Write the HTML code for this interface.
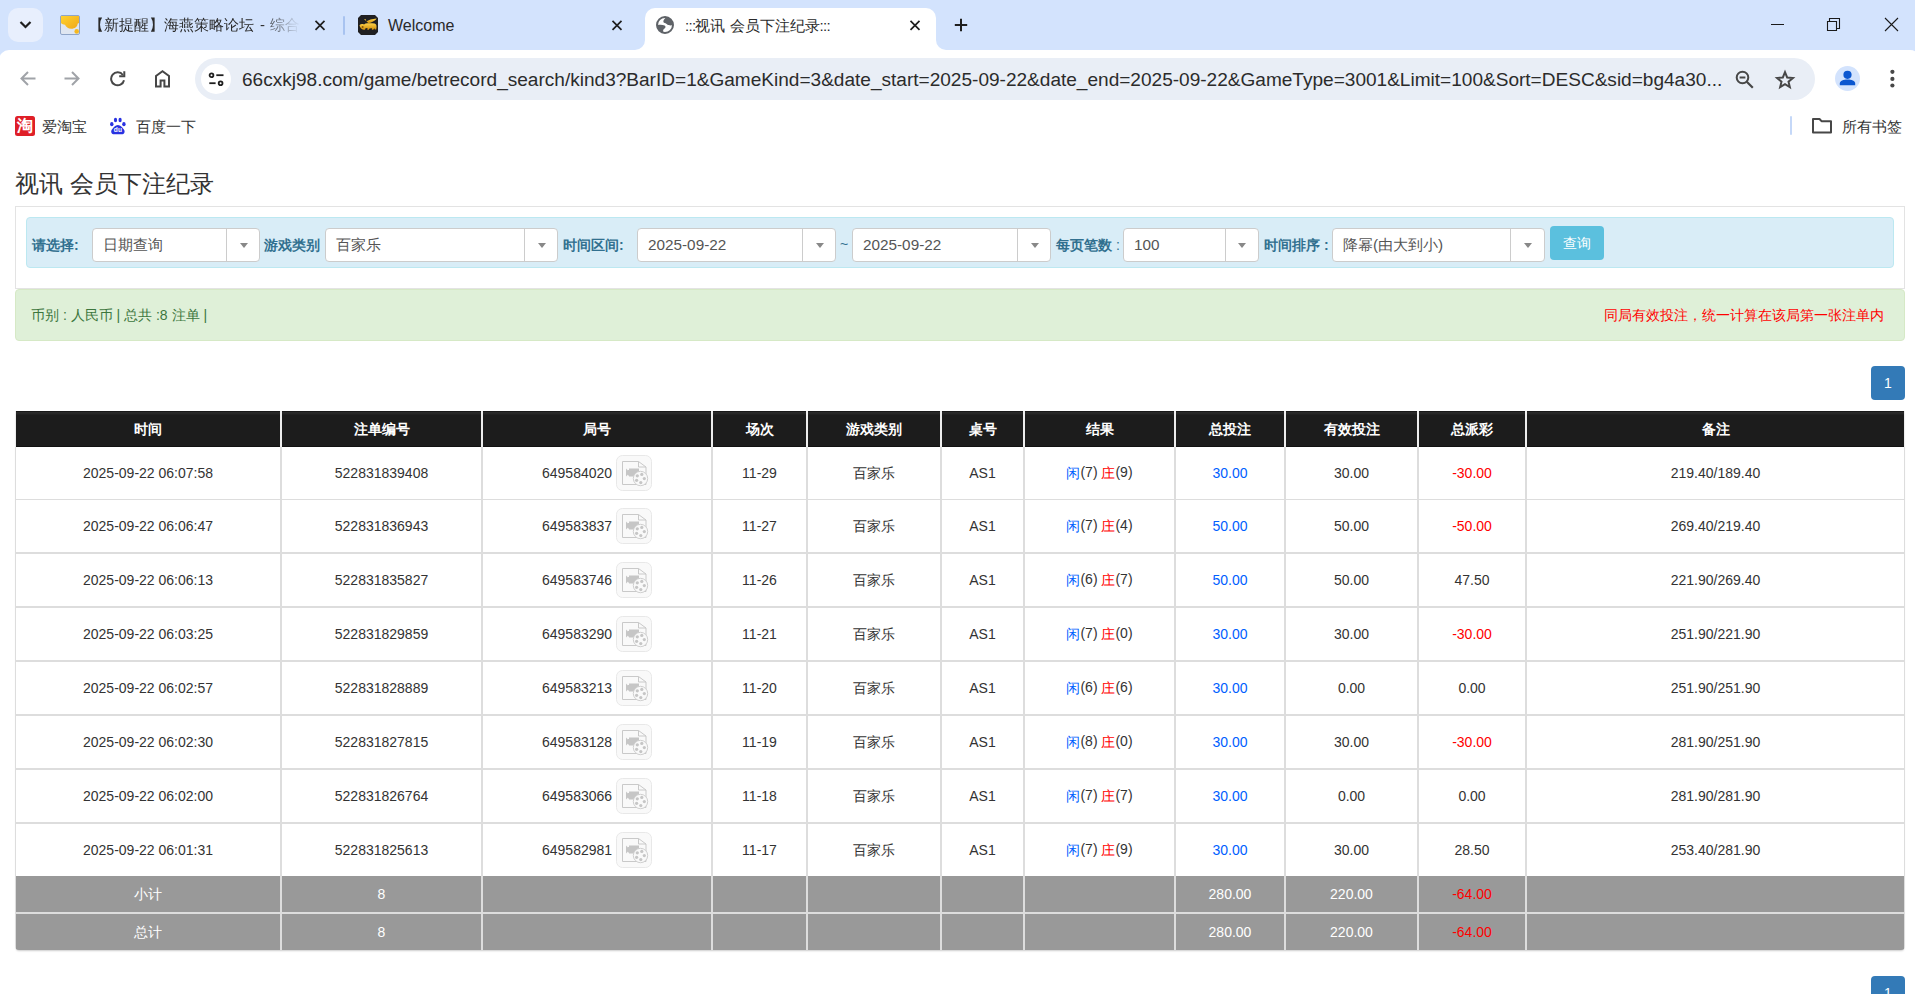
<!DOCTYPE html>
<html><head><meta charset="utf-8"><title>:::视讯 会员下注纪录:::</title>
<style>
*{box-sizing:border-box}
html,body{margin:0;padding:0}
body{width:1915px;height:994px;overflow:hidden;position:relative;background:#fff;font-family:"Liberation Sans",sans-serif;color:#333}
.abs{position:absolute}
svg{display:block}
/* browser chrome */
#tabstrip{left:0;top:0;width:1915px;height:64px;background:#d3e3fd}
#tabsearch{left:8px;top:8px;width:35px;height:34px;border-radius:10px;background:#e8effd}
.tabtitle{font-size:15px;color:#2a2a2a;white-space:nowrap;line-height:20px}
#activetab{left:645px;top:8px;width:291px;height:42px;background:#fff;border-radius:10px 10px 0 0}
.flare{width:10px;height:10px;top:40px;background:#fff}
.flare i{position:absolute;left:0;top:0;width:10px;height:10px;background:#d3e3fd}
#toolbar{left:-1px;top:50px;width:1921px;height:56px;background:#fff;border-radius:10px 10px 0 0}
#omnibox{left:195px;top:58px;width:1620px;height:42px;border-radius:21px;background:#e9eef6}
#tune{left:201px;top:64px;width:30px;height:30px;border-radius:50%;background:#fff}
#url{left:242px;top:67.5px;font-size:19.06px;line-height:24px;color:#2b2b2b;white-space:nowrap;letter-spacing:0}
.bm{font-size:15px;color:#333;line-height:20px;white-space:nowrap}
/* page */
#title{left:15px;top:169px;font-size:24px;line-height:30px;color:#333;white-space:nowrap}
#well{left:15px;top:206px;width:1890px;height:83px;border:1px solid #e3e3e3;background:#fff}
#filter{left:26px;top:217px;width:1868px;height:51px;background:#d9edf7;border:1px solid #bce8f1;border-radius:4px}
.lbl{font-size:14px;font-weight:bold;color:#31708f;line-height:20px;white-space:nowrap;top:235px}
.sel{top:228px;height:34px;border:1px solid #ccc;border-radius:4px;background:#fff}
.sel .v{position:absolute;left:10px;top:6px;font-size:15.3px;line-height:20px;color:#555;white-space:nowrap}
.sel .d{position:absolute;top:0;bottom:0;width:1px;background:#ccc}
.sel .c{position:absolute;top:14px;width:0;height:0;border-left:4px solid transparent;border-right:4px solid transparent;border-top:5px solid #888}
#btnq{left:1550px;top:226px;width:54px;height:34px;background:#5bc0de;border-radius:4px;color:#fff;font-size:14px;line-height:34px;text-align:center}
#green{left:15px;top:289px;width:1890px;height:52px;background:#dff0d8;border:1px solid #d6e9c6;border-radius:4px}
#green .l{position:absolute;left:15px;top:15px;font-size:14px;line-height:20px;color:#3c763d;white-space:nowrap}
#green .r{position:absolute;right:20px;top:15px;font-size:14px;line-height:20px;color:#f00;white-space:nowrap}
.page1{left:1871px;width:34px;height:34px;background:#337ab7;border-radius:4px;color:#fff;font-size:14px;line-height:34px;text-align:center}

#tbl{background:#ddd;overflow:hidden;border-radius:0 0 4px 4px;box-shadow:0 2px 2px -1px rgba(0,0,0,.2)}
#tbl>div{position:absolute;display:flex;align-items:center;justify-content:center;font-size:14px;white-space:nowrap}
.th{background:linear-gradient(#181818 0,#181818 1px,#2b2b2b 1px,#262626 3px,#1c1c1c 4px,#1c1c1c 35px,#111 35px);color:#fff;font-weight:bold}
.td{background:#fff;color:#333}
.tg{background:#999;color:#fff}
.rd{color:#f00}
.cj{position:relative;top:1px}
.bl{color:#0060ff}
.vi{display:block}
.ic{display:inline-flex;align-items:center}
</style></head><body>
<svg width="0" height="0" style="position:absolute"><defs>
<symbol id="vicon" viewBox="0 0 36 36">
<rect x="0.5" y="0.5" width="35" height="35" rx="6" fill="#f9f9f9" stroke="#e8e8e8"/>
<path d="M6.5 6.5 H22.5 L30 12 V29.5 H6.5 Z" fill="#f9f9f9" stroke="#c9c9c9" stroke-width="1"/>
<path d="M22.5 6.5 V12 H30" fill="none" stroke="#c9c9c9" stroke-width="1"/>
<path d="M10 13.5 L12 15.5 V19.5 L10 21.5 Z M12 15 H23 V20.5 H12 Z" fill="#c6c6c6"/>
<rect x="13" y="13.5" width="10" height="8" fill="#c6c6c6"/>
<circle cx="24.5" cy="23.5" r="7.2" fill="#f9f9f9" stroke="#cfcfcf" stroke-width="1"/>
<circle cx="21.3" cy="20.8" r="1.6" fill="#c6c6c6"/><circle cx="25.8" cy="19.4" r="1.6" fill="#c6c6c6"/>
<circle cx="28.3" cy="23.6" r="1.6" fill="#c6c6c6"/><circle cx="20.6" cy="25.3" r="1.6" fill="#c6c6c6"/>
<circle cx="24.8" cy="27.6" r="1.6" fill="#c6c6c6"/>
</symbol></defs></svg>

<!-- TAB STRIP -->
<div id="tabstrip" class="abs"></div>
<div id="tabsearch" class="abs"></div>
<svg class="abs" style="left:19px;top:20px" width="13" height="10" viewBox="0 0 13 10"><path d="M1.5 2 L6.5 7 L11.5 2" fill="none" stroke="#1f1f1f" stroke-width="2.2"/></svg>

<div id="activetab" class="abs"></div>
<div class="abs flare" style="left:635px"><i style="border-bottom-right-radius:10px"></i></div>
<div class="abs flare" style="left:936px"><i style="border-bottom-left-radius:10px"></i></div>

<!-- tab 1 -->
<svg class="abs" style="left:60px;top:15px" width="20" height="20" viewBox="0 0 20 20">
<rect x="0.5" y="0.5" width="19" height="19" rx="1.5" fill="#dfe6f1" stroke="#8fa5c8"/>
<defs><linearGradient id="yb" x1="0" y1="0" x2="1" y2="1"><stop offset="0" stop-color="#ffd22e"/><stop offset="1" stop-color="#f0a81a"/></linearGradient></defs><path d="M1 1 H19 V8 L17.6 8.8 C17.6 11.6, 15 13.8, 11.3 13.8 C8 13.8, 6 12, 5 9.8 C3.5 9.5, 1.8 9, 1 8 Z" fill="url(#yb)"/>
<circle cx="16.7" cy="16.4" r="2.3" fill="#f5b820"/>
</svg>
<div class="abs tabtitle" style="left:89px;top:15px;width:211px;overflow:hidden;-webkit-mask-image:linear-gradient(to right,#000 172px,rgba(0,0,0,.15) 205px,transparent 211px)">【新提醒】海燕策略论坛<span style="margin:0 0.5px 0 6px">-</span> 综合论坛</div>
<svg class="abs" style="left:314px;top:20px" width="12" height="11" viewBox="0 0 12 11"><path d="M1.5 0.8 L10.5 9.8 M10.5 0.8 L1.5 9.8" stroke="#1f1f1f" stroke-width="1.7"/></svg>
<div class="abs" style="left:343px;top:16px;width:2px;height:19px;background:#a8c3f0;border-radius:1px"></div>

<!-- tab 2 -->
<svg class="abs" style="left:358px;top:15px" width="20" height="20" viewBox="0 0 20 20">
<defs><linearGradient id="gold" x1="0" y1="0" x2="0" y2="1"><stop offset="0" stop-color="#ffd34a"/><stop offset="1" stop-color="#d08e0c"/></linearGradient></defs>
<path d="M3 0 H17 L20 3 V17 L17 20 H3 L0 17 V3 Z" fill="#202022"/>
<path d="M6.2 4.2 C7 3.6, 7.8 4, 8 5 L8.3 6.5 C10.5 5.2, 14 4, 18.6 3.6 C17.8 5.2, 15.5 6.8, 12.5 7.8 L10.5 8.2 Z" fill="url(#gold)"/>
<path d="M1.5 10.2 C2.5 9, 4.5 8.8, 6 9.6 L7.5 8.6 C9.5 8, 13.5 8, 16.5 8.6 C18 9, 18.8 10.5, 18.5 12.5 L18.2 14.6 L16.8 14.6 L16.5 13.2 L15.2 14.8 L13.8 14.8 L14 13.3 L11.5 13.5 L10.8 14.8 L9.3 14.8 L9.5 13 L7.5 13.2 L7 14.8 L5.5 14.8 C3.5 14.5, 2 12.5, 1.5 10.2 Z" fill="url(#gold)"/>
<circle cx="4.6" cy="12" r="1" fill="#8a5a08"/>
</svg>
<div class="abs tabtitle" style="left:388px;top:16px;font-size:16px">Welcome</div>
<svg class="abs" style="left:611px;top:20px" width="12" height="11" viewBox="0 0 12 11"><path d="M1.5 0.8 L10.5 9.8 M10.5 0.8 L1.5 9.8" stroke="#1f1f1f" stroke-width="1.7"/></svg>

<!-- active tab -->
<svg class="abs" style="left:656px;top:16px" width="18" height="18" viewBox="0 0 18 18">
<circle cx="9" cy="9" r="8" fill="#fff" stroke="#5f6368" stroke-width="2"/>
<path d="M10.4 1.3 C8.6 2.6, 7 4.6, 7.4 5.9 C7.9 7.1, 9.8 6.9, 11 8.2 C11.8 9.2, 13.6 9.6, 16.6 9.3 L17 9 A8 8 0 0 0 10.4 1.3 Z" fill="#5f6368"/>
<path d="M1.2 9.2 C3 8.8, 6.5 8.6, 8.6 9.6 C10 10.4, 9.8 12, 8.2 12.8 C7 13.4, 6.8 15, 7.6 16.8 A8 8 0 0 1 1.2 9.2 Z" fill="#5f6368"/>
</svg>
<div class="abs tabtitle" style="left:685px;top:16px"><span style="letter-spacing:-0.7px">:::</span>视讯 会员下注纪录<span style="letter-spacing:-0.7px">:::</span></div>
<svg class="abs" style="left:909px;top:20px" width="12" height="11" viewBox="0 0 12 11"><path d="M1.5 0.8 L10.5 9.8 M10.5 0.8 L1.5 9.8" stroke="#1f1f1f" stroke-width="1.7"/></svg>
<svg class="abs" style="left:954px;top:18px" width="14" height="14" viewBox="0 0 14 14"><path d="M7 0.8 V13.2 M0.8 7 H13.2" stroke="#1f1f1f" stroke-width="2"/></svg>

<!-- window controls -->
<div class="abs" style="left:1771px;top:24px;width:13px;height:1px;background:#1a1a1a"></div>
<svg class="abs" style="left:1826px;top:17px" width="15" height="15" viewBox="0 0 15 15"><path d="M1.5 4.5 H10.5 V13.5 H1.5 Z M3.5 4.5 V1.5 H13.5 V11.5 H10.5" fill="none" stroke="#1a1a1a" stroke-width="1.1"/></svg>
<svg class="abs" style="left:1884px;top:17px" width="15" height="15" viewBox="0 0 15 15"><path d="M1 1 L14 14 M14 1 L1 14" stroke="#1a1a1a" stroke-width="1.1"/></svg>

<!-- TOOLBAR -->
<div id="toolbar" class="abs"></div>
<div id="omnibox" class="abs"></div>
<div id="tune" class="abs"></div>
<!-- toolbar icons -->
<svg class="abs" style="left:19px;top:70px" width="18" height="17" viewBox="0 0 18 17"><path d="M16.5 8.5 H3 M9 2 L2.5 8.5 L9 15" fill="none" stroke="#a0a3a8" stroke-width="2"/></svg>
<svg class="abs" style="left:63px;top:70px" width="18" height="17" viewBox="0 0 18 17"><path d="M1.5 8.5 H15 M9 2 L15.5 8.5 L9 15" fill="none" stroke="#a0a3a8" stroke-width="2"/></svg>
<svg class="abs" style="left:109px;top:70px" width="18" height="17" viewBox="0 0 18 17"><path d="M13.9 5.0 A6.5 6.5 0 1 0 15.0 10.2" fill="none" stroke="#474747" stroke-width="2"/><path d="M15.3 1.2 V6.3 H10.2" fill="none" stroke="#474747" stroke-width="2"/></svg>
<svg class="abs" style="left:154px;top:69px" width="18" height="20" viewBox="0 0 18 20"><path d="M2 17.6 V6.9 L8.5 2.2 L15 6.9 V17.6 H10.4 V11.5 H6.6 V17.6 Z" fill="none" stroke="#474747" stroke-width="2" stroke-linejoin="miter"/></svg>
<svg class="abs" style="left:208px;top:71px" width="17" height="16" viewBox="0 0 17 16"><circle cx="3.5" cy="4.2" r="1.9" fill="none" stroke="#1f1f1f" stroke-width="1.8"/><path d="M8.3 4.2 H15.5" stroke="#1f1f1f" stroke-width="1.8"/><path d="M1.3 12.2 H7.6" stroke="#1f1f1f" stroke-width="1.8"/><circle cx="12.6" cy="12.2" r="1.9" fill="none" stroke="#1f1f1f" stroke-width="1.8"/></svg>
<svg class="abs" style="left:1735px;top:70px" width="20" height="19" viewBox="0 0 20 19"><circle cx="7.5" cy="7.5" r="5.8" fill="none" stroke="#474747" stroke-width="2"/><path d="M4.6 7.5 H10.4" stroke="#474747" stroke-width="2"/><path d="M11.8 11.8 L17.8 17.8" stroke="#474747" stroke-width="2.2"/></svg>
<svg class="abs" style="left:1774px;top:69px" width="22" height="21" viewBox="0 0 22 21"><g transform="translate(11 11) scale(0.9) translate(-11 -11)"><path d="M11 2.3 L13.4 8.2 L19.8 8.7 L14.9 12.8 L16.4 19 L11 15.7 L5.6 19 L7.1 12.8 L2.2 8.7 L8.6 8.2 Z" fill="none" stroke="#474747" stroke-width="2.2" stroke-linejoin="miter"/></g></svg>
<svg class="abs" style="left:1835px;top:66px" width="25" height="25" viewBox="0 0 25 25"><circle cx="12.5" cy="12.5" r="12.5" fill="#d3e3fd"/><circle cx="12.5" cy="8.8" r="4.1" fill="#0b57d0"/><path d="M4.8 19.3 V17.6 C4.8 14.9, 8.5 13.6, 12.5 13.6 C16.5 13.6, 20.2 14.9, 20.2 17.6 V19.3 Z" fill="#0b57d0"/></svg>
<svg class="abs" style="left:1889px;top:68px" width="7" height="22" viewBox="0 0 7 22"><circle cx="3.4" cy="3.8" r="2.1" fill="#474747"/><circle cx="3.4" cy="10.9" r="2.1" fill="#474747"/><circle cx="3.4" cy="17.5" r="2.1" fill="#474747"/></svg>
<div id="url" class="abs">66cxkj98.com/game/betrecord_search/kind3?BarID=1&amp;GameKind=3&amp;date_start=2025-09-22&amp;date_end=2025-09-22&amp;GameType=3001&amp;Limit=100&amp;Sort=DESC&amp;sid=bg4a30...</div>

<!-- BOOKMARKS -->
<svg class="abs" style="left:15px;top:116px" width="20" height="20" viewBox="0 0 20 20"><rect width="20" height="20" rx="2.5" fill="#df1f27"/><text x="9.8" y="14.9" font-size="15.5" font-weight="bold" fill="#fff" text-anchor="middle" font-family="Liberation Sans, sans-serif">淘</text></svg>
<div class="abs bm" style="left:42px;top:117px">爱淘宝</div>
<svg class="abs" style="left:109px;top:117px" width="18" height="19" viewBox="0 0 18 19"><ellipse cx="2.8" cy="7.2" rx="1.7" ry="2.1" fill="#2932e1"/><ellipse cx="6.5" cy="3" rx="1.6" ry="2.2" fill="#2932e1"/><ellipse cx="11.1" cy="3" rx="1.6" ry="2.2" fill="#2932e1"/><ellipse cx="14.9" cy="7.2" rx="1.7" ry="2.1" fill="#2932e1"/><path d="M8.9 8 C6.5 8, 3.8 11, 2.6 13 C1.6 15, 2.6 17.3, 5 17.3 H12.8 C15.2 17.3, 16.2 15, 15.2 13 C14 11, 11.3 8, 8.9 8 Z" fill="#2932e1"/><text x="8.9" y="15.4" font-size="6.6" font-weight="bold" fill="#fff" text-anchor="middle" font-family="Liberation Sans, sans-serif">du</text></svg>
<div class="abs bm" style="left:136px;top:117px">百度一下</div>
<div class="abs" style="left:1790px;top:116px;width:2px;height:19px;background:#c5d8f8;border-radius:1px"></div>
<svg class="abs" style="left:1811px;top:117px" width="22" height="17" viewBox="0 0 22 17"><path d="M2 2 H8.5 L10.5 4.2 H20 V15.5 H2 Z" fill="none" stroke="#474747" stroke-width="2" stroke-linejoin="round"/></svg>
<div class="abs bm" style="left:1842px;top:117px">所有书签</div>

<!-- PAGE -->
<div id="title" class="abs">视讯 会员下注纪录</div>
<div id="well" class="abs"></div>
<div id="filter" class="abs"></div>

<div class="abs lbl" style="left:32px">请选择:</div>
<div class="abs sel" style="left:92px;width:168px"><span class="v">日期查询</span><span class="d" style="left:133px"></span><span class="c" style="left:147px"></span></div>
<div class="abs lbl" style="left:264px">游戏类别</div>
<div class="abs sel" style="left:325px;width:233px"><span class="v">百家乐</span><span class="d" style="left:198px"></span><span class="c" style="left:212px"></span></div>
<div class="abs lbl" style="left:563px">时间区间:</div>
<div class="abs sel" style="left:637px;width:199px"><span class="v">2025-09-22</span><span class="d" style="left:164px"></span><span class="c" style="left:178px"></span></div>
<div class="abs" style="left:840px;top:234px;font-size:14px;line-height:20px;color:#31708f">~</div>
<div class="abs sel" style="left:852px;width:199px"><span class="v">2025-09-22</span><span class="d" style="left:164px"></span><span class="c" style="left:178px"></span></div>
<div class="abs lbl" style="left:1056px">每页笔数 <span style="font-weight:normal">:</span></div>
<div class="abs sel" style="left:1123px;width:136px"><span class="v">100</span><span class="d" style="left:101px"></span><span class="c" style="left:114px"></span></div>
<div class="abs lbl" style="left:1264px">时间排序 :</div>
<div class="abs sel" style="left:1332px;width:213px"><span class="v">降幂(由大到小)</span><span class="d" style="left:177px"></span><span class="c" style="left:191px"></span></div>
<div id="btnq" class="abs">查询</div>

<div id="green" class="abs"><span class="l">币别 : 人民币 | 总共 :8 注单 |</span><span class="r">同局有效投注，统一计算在该局第一张注单内</span></div>

<div class="abs page1" style="top:366px">1</div>

<!--TABLE-->
<div id="tbl" class="abs" style="left:15px;top:411px;width:1890px;height:539px">
<div style="left:0;top:0;width:1890px;height:36px;background:#ededed"></div>
<div class="th" style="left:1px;top:0px;width:264px;height:36px"><span><span class="cj">时间</span></span></div>
<div class="th" style="left:267px;top:0px;width:199px;height:36px"><span><span class="cj">注单编号</span></span></div>
<div class="th" style="left:468px;top:0px;width:228px;height:36px"><span><span class="cj">局号</span></span></div>
<div class="th" style="left:698px;top:0px;width:93px;height:36px"><span><span class="cj">场次</span></span></div>
<div class="th" style="left:793px;top:0px;width:132px;height:36px"><span><span class="cj">游戏类别</span></span></div>
<div class="th" style="left:927px;top:0px;width:81px;height:36px"><span><span class="cj">桌号</span></span></div>
<div class="th" style="left:1010px;top:0px;width:149px;height:36px"><span><span class="cj">结果</span></span></div>
<div class="th" style="left:1161px;top:0px;width:108px;height:36px"><span><span class="cj">总投注</span></span></div>
<div class="th" style="left:1271px;top:0px;width:131px;height:36px"><span><span class="cj">有效投注</span></span></div>
<div class="th" style="left:1404px;top:0px;width:106px;height:36px"><span><span class="cj">总派彩</span></span></div>
<div class="th" style="left:1512px;top:0px;width:377px;height:36px"><span><span class="cj">备注</span></span></div>
<div class="td" style="left:1px;top:36px;width:264px;height:52px"><span>2025-09-22 06:07:58</span></div>
<div class="td" style="left:267px;top:36px;width:199px;height:52px"><span>522831839408</span></div>
<div class="td" style="left:468px;top:36px;width:228px;height:52px"><span><span class="ic">649584020&nbsp;<svg class="vi" width="36" height="36" viewBox="0 0 36 36"><use href="#vicon"/></svg></span></span></div>
<div class="td" style="left:698px;top:36px;width:93px;height:52px"><span>11-29</span></div>
<div class="td" style="left:793px;top:36px;width:132px;height:52px"><span><span class="cj">百家乐</span></span></div>
<div class="td" style="left:927px;top:36px;width:81px;height:52px"><span>AS1</span></div>
<div class="td" style="left:1010px;top:36px;width:149px;height:52px"><span><span class="bl cj">闲</span>(7) <span class="rd cj">庄</span>(9)</span></div>
<div class="td" style="left:1161px;top:36px;width:108px;height:52px"><span><span class="bl">30.00</span></span></div>
<div class="td" style="left:1271px;top:36px;width:131px;height:52px"><span>30.00</span></div>
<div class="td" style="left:1404px;top:36px;width:106px;height:52px"><span><span class="rd">-30.00</span></span></div>
<div class="td" style="left:1512px;top:36px;width:377px;height:52px"><span>219.40/189.40</span></div>
<div class="td" style="left:1px;top:89px;width:264px;height:52px"><span>2025-09-22 06:06:47</span></div>
<div class="td" style="left:267px;top:89px;width:199px;height:52px"><span>522831836943</span></div>
<div class="td" style="left:468px;top:89px;width:228px;height:52px"><span><span class="ic">649583837&nbsp;<svg class="vi" width="36" height="36" viewBox="0 0 36 36"><use href="#vicon"/></svg></span></span></div>
<div class="td" style="left:698px;top:89px;width:93px;height:52px"><span>11-27</span></div>
<div class="td" style="left:793px;top:89px;width:132px;height:52px"><span><span class="cj">百家乐</span></span></div>
<div class="td" style="left:927px;top:89px;width:81px;height:52px"><span>AS1</span></div>
<div class="td" style="left:1010px;top:89px;width:149px;height:52px"><span><span class="bl cj">闲</span>(7) <span class="rd cj">庄</span>(4)</span></div>
<div class="td" style="left:1161px;top:89px;width:108px;height:52px"><span><span class="bl">50.00</span></span></div>
<div class="td" style="left:1271px;top:89px;width:131px;height:52px"><span>50.00</span></div>
<div class="td" style="left:1404px;top:89px;width:106px;height:52px"><span><span class="rd">-50.00</span></span></div>
<div class="td" style="left:1512px;top:89px;width:377px;height:52px"><span>269.40/219.40</span></div>
<div class="td" style="left:1px;top:143px;width:264px;height:52px"><span>2025-09-22 06:06:13</span></div>
<div class="td" style="left:267px;top:143px;width:199px;height:52px"><span>522831835827</span></div>
<div class="td" style="left:468px;top:143px;width:228px;height:52px"><span><span class="ic">649583746&nbsp;<svg class="vi" width="36" height="36" viewBox="0 0 36 36"><use href="#vicon"/></svg></span></span></div>
<div class="td" style="left:698px;top:143px;width:93px;height:52px"><span>11-26</span></div>
<div class="td" style="left:793px;top:143px;width:132px;height:52px"><span><span class="cj">百家乐</span></span></div>
<div class="td" style="left:927px;top:143px;width:81px;height:52px"><span>AS1</span></div>
<div class="td" style="left:1010px;top:143px;width:149px;height:52px"><span><span class="bl cj">闲</span>(6) <span class="rd cj">庄</span>(7)</span></div>
<div class="td" style="left:1161px;top:143px;width:108px;height:52px"><span><span class="bl">50.00</span></span></div>
<div class="td" style="left:1271px;top:143px;width:131px;height:52px"><span>50.00</span></div>
<div class="td" style="left:1404px;top:143px;width:106px;height:52px"><span>47.50</span></div>
<div class="td" style="left:1512px;top:143px;width:377px;height:52px"><span>221.90/269.40</span></div>
<div class="td" style="left:1px;top:197px;width:264px;height:52px"><span>2025-09-22 06:03:25</span></div>
<div class="td" style="left:267px;top:197px;width:199px;height:52px"><span>522831829859</span></div>
<div class="td" style="left:468px;top:197px;width:228px;height:52px"><span><span class="ic">649583290&nbsp;<svg class="vi" width="36" height="36" viewBox="0 0 36 36"><use href="#vicon"/></svg></span></span></div>
<div class="td" style="left:698px;top:197px;width:93px;height:52px"><span>11-21</span></div>
<div class="td" style="left:793px;top:197px;width:132px;height:52px"><span><span class="cj">百家乐</span></span></div>
<div class="td" style="left:927px;top:197px;width:81px;height:52px"><span>AS1</span></div>
<div class="td" style="left:1010px;top:197px;width:149px;height:52px"><span><span class="bl cj">闲</span>(7) <span class="rd cj">庄</span>(0)</span></div>
<div class="td" style="left:1161px;top:197px;width:108px;height:52px"><span><span class="bl">30.00</span></span></div>
<div class="td" style="left:1271px;top:197px;width:131px;height:52px"><span>30.00</span></div>
<div class="td" style="left:1404px;top:197px;width:106px;height:52px"><span><span class="rd">-30.00</span></span></div>
<div class="td" style="left:1512px;top:197px;width:377px;height:52px"><span>251.90/221.90</span></div>
<div class="td" style="left:1px;top:251px;width:264px;height:52px"><span>2025-09-22 06:02:57</span></div>
<div class="td" style="left:267px;top:251px;width:199px;height:52px"><span>522831828889</span></div>
<div class="td" style="left:468px;top:251px;width:228px;height:52px"><span><span class="ic">649583213&nbsp;<svg class="vi" width="36" height="36" viewBox="0 0 36 36"><use href="#vicon"/></svg></span></span></div>
<div class="td" style="left:698px;top:251px;width:93px;height:52px"><span>11-20</span></div>
<div class="td" style="left:793px;top:251px;width:132px;height:52px"><span><span class="cj">百家乐</span></span></div>
<div class="td" style="left:927px;top:251px;width:81px;height:52px"><span>AS1</span></div>
<div class="td" style="left:1010px;top:251px;width:149px;height:52px"><span><span class="bl cj">闲</span>(6) <span class="rd cj">庄</span>(6)</span></div>
<div class="td" style="left:1161px;top:251px;width:108px;height:52px"><span><span class="bl">30.00</span></span></div>
<div class="td" style="left:1271px;top:251px;width:131px;height:52px"><span>0.00</span></div>
<div class="td" style="left:1404px;top:251px;width:106px;height:52px"><span>0.00</span></div>
<div class="td" style="left:1512px;top:251px;width:377px;height:52px"><span>251.90/251.90</span></div>
<div class="td" style="left:1px;top:305px;width:264px;height:52px"><span>2025-09-22 06:02:30</span></div>
<div class="td" style="left:267px;top:305px;width:199px;height:52px"><span>522831827815</span></div>
<div class="td" style="left:468px;top:305px;width:228px;height:52px"><span><span class="ic">649583128&nbsp;<svg class="vi" width="36" height="36" viewBox="0 0 36 36"><use href="#vicon"/></svg></span></span></div>
<div class="td" style="left:698px;top:305px;width:93px;height:52px"><span>11-19</span></div>
<div class="td" style="left:793px;top:305px;width:132px;height:52px"><span><span class="cj">百家乐</span></span></div>
<div class="td" style="left:927px;top:305px;width:81px;height:52px"><span>AS1</span></div>
<div class="td" style="left:1010px;top:305px;width:149px;height:52px"><span><span class="bl cj">闲</span>(8) <span class="rd cj">庄</span>(0)</span></div>
<div class="td" style="left:1161px;top:305px;width:108px;height:52px"><span><span class="bl">30.00</span></span></div>
<div class="td" style="left:1271px;top:305px;width:131px;height:52px"><span>30.00</span></div>
<div class="td" style="left:1404px;top:305px;width:106px;height:52px"><span><span class="rd">-30.00</span></span></div>
<div class="td" style="left:1512px;top:305px;width:377px;height:52px"><span>281.90/251.90</span></div>
<div class="td" style="left:1px;top:359px;width:264px;height:52px"><span>2025-09-22 06:02:00</span></div>
<div class="td" style="left:267px;top:359px;width:199px;height:52px"><span>522831826764</span></div>
<div class="td" style="left:468px;top:359px;width:228px;height:52px"><span><span class="ic">649583066&nbsp;<svg class="vi" width="36" height="36" viewBox="0 0 36 36"><use href="#vicon"/></svg></span></span></div>
<div class="td" style="left:698px;top:359px;width:93px;height:52px"><span>11-18</span></div>
<div class="td" style="left:793px;top:359px;width:132px;height:52px"><span><span class="cj">百家乐</span></span></div>
<div class="td" style="left:927px;top:359px;width:81px;height:52px"><span>AS1</span></div>
<div class="td" style="left:1010px;top:359px;width:149px;height:52px"><span><span class="bl cj">闲</span>(7) <span class="rd cj">庄</span>(7)</span></div>
<div class="td" style="left:1161px;top:359px;width:108px;height:52px"><span><span class="bl">30.00</span></span></div>
<div class="td" style="left:1271px;top:359px;width:131px;height:52px"><span>0.00</span></div>
<div class="td" style="left:1404px;top:359px;width:106px;height:52px"><span>0.00</span></div>
<div class="td" style="left:1512px;top:359px;width:377px;height:52px"><span>281.90/281.90</span></div>
<div class="td" style="left:1px;top:413px;width:264px;height:52px"><span>2025-09-22 06:01:31</span></div>
<div class="td" style="left:267px;top:413px;width:199px;height:52px"><span>522831825613</span></div>
<div class="td" style="left:468px;top:413px;width:228px;height:52px"><span><span class="ic">649582981&nbsp;<svg class="vi" width="36" height="36" viewBox="0 0 36 36"><use href="#vicon"/></svg></span></span></div>
<div class="td" style="left:698px;top:413px;width:93px;height:52px"><span>11-17</span></div>
<div class="td" style="left:793px;top:413px;width:132px;height:52px"><span><span class="cj">百家乐</span></span></div>
<div class="td" style="left:927px;top:413px;width:81px;height:52px"><span>AS1</span></div>
<div class="td" style="left:1010px;top:413px;width:149px;height:52px"><span><span class="bl cj">闲</span>(7) <span class="rd cj">庄</span>(9)</span></div>
<div class="td" style="left:1161px;top:413px;width:108px;height:52px"><span><span class="bl">30.00</span></span></div>
<div class="td" style="left:1271px;top:413px;width:131px;height:52px"><span>30.00</span></div>
<div class="td" style="left:1404px;top:413px;width:106px;height:52px"><span>28.50</span></div>
<div class="td" style="left:1512px;top:413px;width:377px;height:52px"><span>253.40/281.90</span></div>
<div class="tg" style="left:1px;top:465px;width:264px;height:36px"><span><span class="cj">小计</span></span></div>
<div class="tg" style="left:267px;top:465px;width:199px;height:36px"><span>8</span></div>
<div class="tg" style="left:468px;top:465px;width:228px;height:36px"><span></span></div>
<div class="tg" style="left:698px;top:465px;width:93px;height:36px"><span></span></div>
<div class="tg" style="left:793px;top:465px;width:132px;height:36px"><span></span></div>
<div class="tg" style="left:927px;top:465px;width:81px;height:36px"><span></span></div>
<div class="tg" style="left:1010px;top:465px;width:149px;height:36px"><span></span></div>
<div class="tg" style="left:1161px;top:465px;width:108px;height:36px"><span>280.00</span></div>
<div class="tg" style="left:1271px;top:465px;width:131px;height:36px"><span>220.00</span></div>
<div class="tg" style="left:1404px;top:465px;width:106px;height:36px"><span><span class="rd">-64.00</span></span></div>
<div class="tg" style="left:1512px;top:465px;width:377px;height:36px"><span></span></div>
<div class="tg" style="left:1px;top:503px;width:264px;height:36px"><span><span class="cj">总计</span></span></div>
<div class="tg" style="left:267px;top:503px;width:199px;height:36px"><span>8</span></div>
<div class="tg" style="left:468px;top:503px;width:228px;height:36px"><span></span></div>
<div class="tg" style="left:698px;top:503px;width:93px;height:36px"><span></span></div>
<div class="tg" style="left:793px;top:503px;width:132px;height:36px"><span></span></div>
<div class="tg" style="left:927px;top:503px;width:81px;height:36px"><span></span></div>
<div class="tg" style="left:1010px;top:503px;width:149px;height:36px"><span></span></div>
<div class="tg" style="left:1161px;top:503px;width:108px;height:36px"><span>280.00</span></div>
<div class="tg" style="left:1271px;top:503px;width:131px;height:36px"><span>220.00</span></div>
<div class="tg" style="left:1404px;top:503px;width:106px;height:36px"><span><span class="rd">-64.00</span></span></div>
<div class="tg" style="left:1512px;top:503px;width:377px;height:36px"><span></span></div>
</div>
<div class="abs page1" style="top:976px">1</div>
</body></html>
